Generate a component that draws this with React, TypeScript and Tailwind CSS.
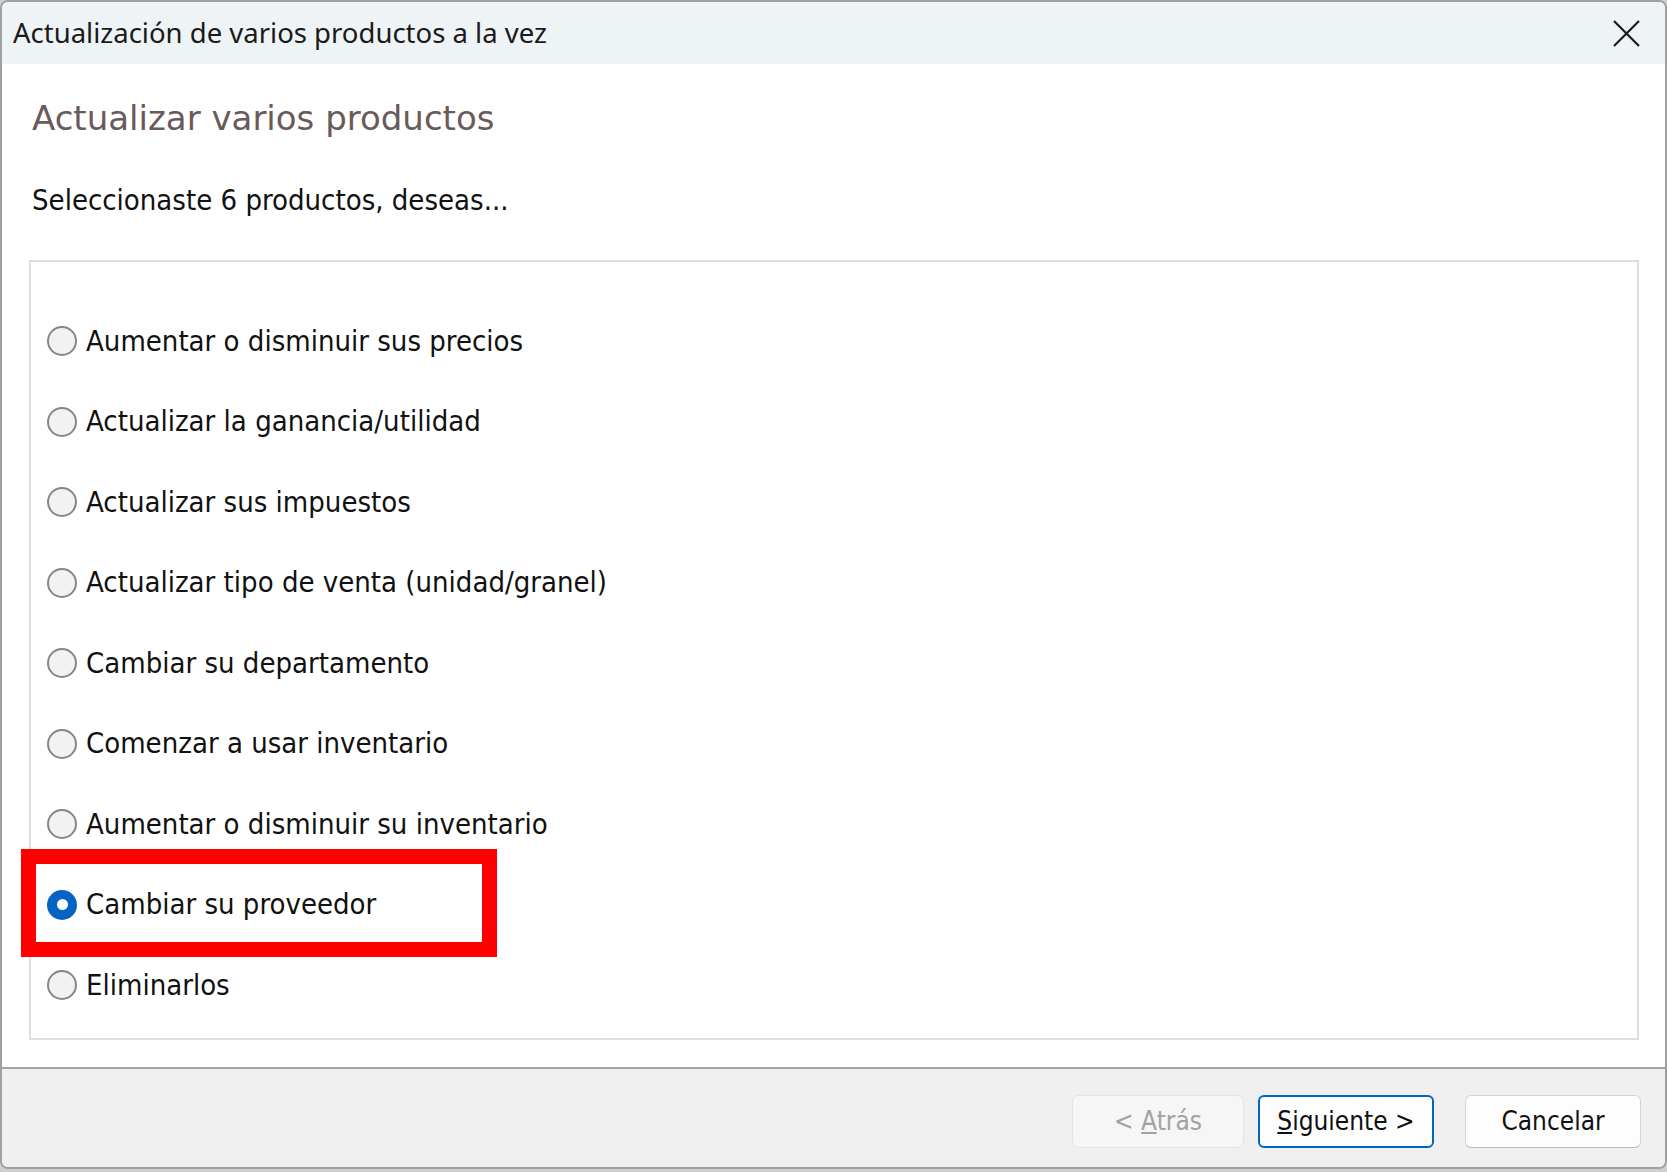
const options = [
  'Aumentar o disminuir sus precios',
  'Actualizar la ganancia/utilidad',
  'Actualizar sus impuestos',
  'Actualizar tipo de venta (unidad/granel)',
  'Cambiar su departamento',
  'Comenzar a usar inventario',
  'Aumentar o disminuir su inventario',
  'Cambiar su proveedor',
  'Eliminarlos',
];

const selected = 'Cambiar su proveedor';

function Radio({ checked }: { checked: boolean }) {
  if (checked) {
    return (
      <div className="w-[30px] h-[30px] rounded-full bg-[#0563c1] flex items-center justify-center shrink-0">
        <div className="w-[11px] h-[11px] rounded-full bg-white" />
      </div>
    );
  }
  return <div className="w-[30px] h-[30px] rounded-full border-2 border-[#868686] bg-[#f2f2f2] shrink-0" />;
}

export default function App() {
  return (
    <div className="relative w-[1667px] h-[1172px] bg-[#cfcfcf] flex font-['DejaVu_Sans_Condensed','Liberation_Sans',sans-serif]">
      <div className="flex-1 mb-[3px] flex flex-col border-2 border-[#a0a0a0] rounded-[8px] overflow-hidden bg-white">
        {/* title bar */}
        <div className="h-[62px] bg-[#eef3f5] flex items-center justify-between pl-[11px] pr-[25px]">
          <span className="font-['Noto_Sans',sans-serif] text-[27.5px] text-[#1a1a1a]">Actualización de varios productos a la vez</span>
          <svg width="27" height="27" viewBox="0 0 27 27" className="text-[#1a1a1a]">
            <path d="M1 1L26 26M26 1L1 26" stroke="currentColor" strokeWidth="2.2" fill="none" />
          </svg>
        </div>

        {/* content */}
        <div className="flex-1 flex flex-col">
          <h1 className="mt-[34px] pl-[30px] h-[40px] leading-[40px] font-['DejaVu_Sans',sans-serif] text-[34px] text-[#6a5a5a]">
            Actualizar varios productos
          </h1>
          <p className="mt-[45px] pl-[30px] h-[34px] leading-[34px] text-[29px] text-[#111]">Seleccionaste 6 productos, deseas...</p>

          <div className="mt-[43px] ml-[27px] mr-[26px] h-[780px] border-2 border-[#dedede] pt-[39px]">
            {options.map((o) => (
              <div key={o} className="h-[80.5px] flex items-center pl-[16px] gap-[9px]">
                <Radio checked={o === selected} />
                <span className="text-[29px] leading-none text-[#111]">{o}</span>
              </div>
            ))}
          </div>
        </div>

        {/* footer */}
        <div className="h-[100px] border-t-2 border-[#a3a3a3] bg-[#f0f0f0] flex items-start justify-end pt-[26px] pr-[24px]">
          <button className="w-[172px] h-[53px] rounded-[6px] border border-[#e4e4e4] bg-[#f6f6f6] text-[26px] text-[#a2a2a2]">
            &lt; <span className="underline">A</span>trás
          </button>
          <button className="ml-[14px] w-[176px] h-[53px] rounded-[6px] border-2 border-[#0067c0] bg-[#fdfdfd] text-[26px] text-[#111]">
            <span className="underline">S</span>iguiente &gt;
          </button>
          <button className="ml-[31px] w-[176px] h-[53px] rounded-[6px] border border-[#d3d3d3] border-b-[#b9b9b9] bg-[#fdfdfd] text-[26px] text-[#111]">
            Cancelar
          </button>
        </div>
      </div>

      {/* red highlight annotation */}
      <div className="absolute left-[21px] top-[849px] w-[476px] h-[108px] border-[15px] border-[#ff0000]" />
    </div>
  );
}
